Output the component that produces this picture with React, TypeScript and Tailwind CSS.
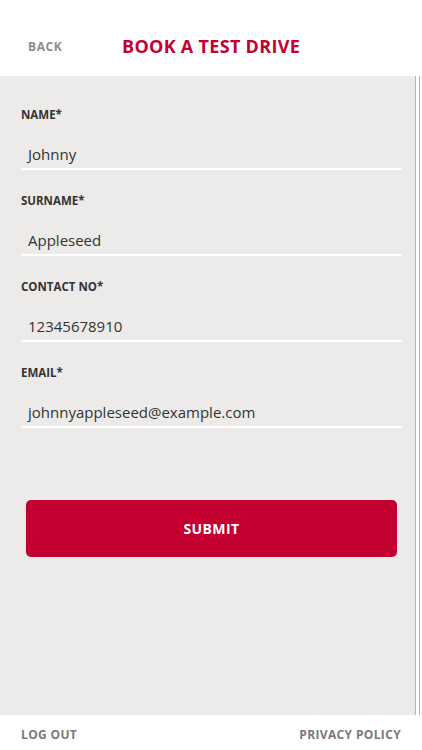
import React from "react";

const fields = [
  { label: "NAME*", value: "Johnny" },
  { label: "SURNAME*", value: "Appleseed" },
  { label: "CONTACT NO*", value: "12345678910" },
  { label: "EMAIL*", value: "johnnyappleseed@example.com" },
];

export default function App() {
  return (
    <div className="w-[422px] h-[750px] bg-white flex flex-col overflow-hidden" style={{ fontFamily: '"Open Sans", "Liberation Sans", sans-serif' }}>
      <div className="h-[76px] flex items-center shrink-0">
        <div className="pl-[28px] w-[122px] text-[12px] font-bold text-[#8c8c8c] tracking-[0.6px] pt-[18px]">BACK</div>
        <div className="text-[18px] font-bold text-[#c3002f] pt-[17px] tracking-[0.3px]">BOOK A TEST DRIVE</div>
      </div>
      <div className="flex h-[639px] shrink-0">
        <div className="w-[415px] bg-[#ecebe9] flex flex-col">
          <div className="pt-[28px] flex flex-col">
            {fields.map((f) => (
              <div key={f.label} className="h-[86px] px-[21px] flex flex-col">
                <div className="text-[11.5px] font-bold text-[#333] h-[22px] leading-[22px]">{f.label}</div>
                <div className="h-[39px] flex items-end pl-[7px] text-[15px] text-[#333]">{f.value}</div>
                <div className="mt-[3px] h-[2px] bg-white w-[381px]" />
              </div>
            ))}
          </div>
          <div className="px-[26px] mt-[52px] pr-[18px]">
            <div className="h-[57px] rounded-[5px] bg-[#c3002f] flex items-center justify-center text-white text-[14px] font-bold tracking-[0.4px]">SUBMIT</div>
          </div>
        </div>
        <div className="w-[1px] bg-[#b5b5b5]" />
        <div className="w-[3px] bg-white" />
        <div className="w-[1px] bg-[#b5b5b5]" />
        <div className="w-[2px] bg-white" />
      </div>
      <div className="flex justify-between px-[21px] pt-[11px] text-[12px] font-bold text-[#7a7a7a] tracking-[0.35px]">
        <span>LOG OUT</span>
        <span>PRIVACY POLICY</span>
      </div>
    </div>
  );
}
